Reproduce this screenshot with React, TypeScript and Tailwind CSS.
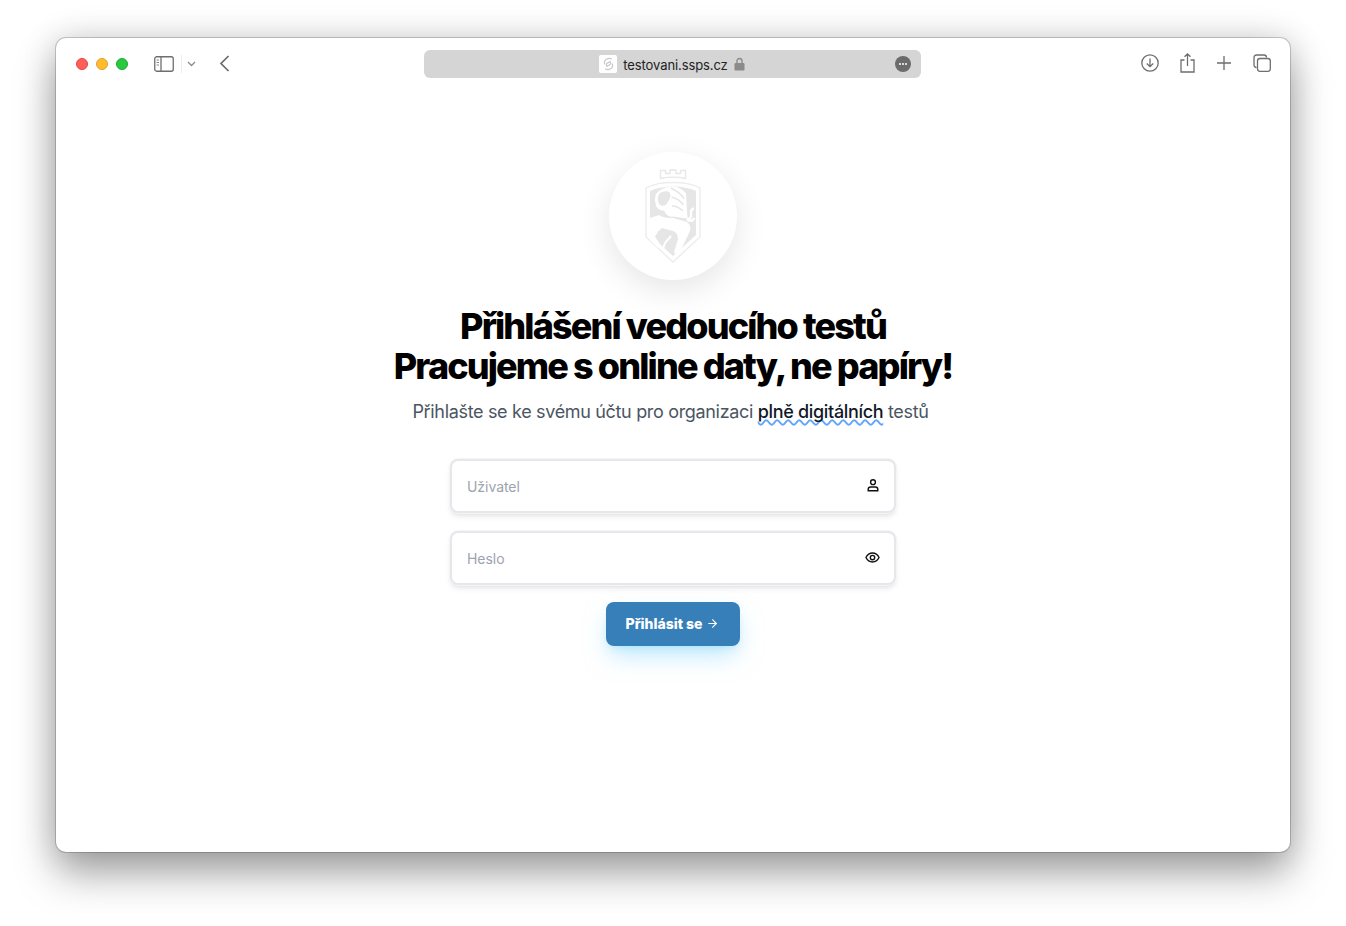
import React from 'react';
import { ArrowRight } from 'lucide-react';

const ShieldLogo = () => (
  <svg width="58" height="98" viewBox="0 0 58 98" fill="none">
    {/* crown */}
    <path d="M16.500 11.500V3.500h5V6.500H26V3h6v3.500h4.500v-3h5v8c-7-1.500-18-1.500-25 0Z" stroke="#e8e8e8" strokeWidth="1.400" strokeLinejoin="round" />
    {/* outer outline */}
    <path d="M2 21C9 17 19 15.500 29 15.500S49 17 56 21v49L29 95 2 70V21Z" stroke="#ececec" strokeWidth="1.300" />
    {/* shield body */}
    <path d="M6 24C12 21 20 19.500 29 19.500S46 21 52 24v44L29 89 6 68V24Z" fill="#e6e6e6" />
    {/* mane */}
    <path d="M12 27c4-5 10-7.500 17-7.500 6 .5 10 3 13 7l1.500 25-14.500-2c-3 1-7-1-9-6-4 0-7-2-8-5l-1-5c0-3 .5-5 1-6.500Z" fill="#fff" />
    <path d="M15 27c2-2 6-3 9-2.500 2.500 1 3 3.500 2 6-1 3-3 7-5.500 8-3 .5-5.500-.5-6-3-.5-1.500-1-4-.5-5 .5-1.500.5-2.500 1-3.500Z" fill="#e6e6e6" />
    <path d="M27 21c6 3 11 7 13 11M27.500 30c4 1 9 4 12 8M28 39c4 0 8 2 11 5" stroke="#e6e6e6" strokeWidth="1.600" />
    {/* tail */}
    <path d="M43 52c3.500 0 4.500-2 4-5-.5-3 .5-5 3-5.500M43 52c2 3 6 2 7.500-1" stroke="#fff" strokeWidth="2.400" />
    {/* body and legs */}
    <path d="M6 51l9-3c5 3 9 3 14 3l14 4c4 3 4 7 2 11l-8 17-5 5-2-3 4-13c0-4-2-7-5-8-4-1-7-2-11-3l-8 7 6 9-2 4-8-8v-22Z" fill="#fff" />
    <path d="M8 71l5-6M27 69l-6 7-2 6" stroke="#fff" strokeWidth="2" />
    {/* inner rim */}
    <path d="M3.500 69L29 92.500 54.500 69" stroke="#fff" strokeWidth="1.400" />
  </svg>
);

const App = () => {
  return (
    <div className="h-[926px] w-full overflow-hidden bg-white px-[56px] pt-[38px] font-['Inter',sans-serif]">
      <div className="flex h-[814px] flex-col rounded-[10px] bg-white shadow-[0_0_0_1px_rgba(0,0,0,0.18),0_22px_40px_rgba(0,0,0,0.34),0_0_34px_rgba(0,0,0,0.16)]">
        {/* safari toolbar */}
        <div className="grid h-[52px] shrink-0 grid-cols-[368px_497px_1fr] items-center">
          <div className="flex items-center pl-[20px]">
            <div className="flex gap-[8px]">
              <span className="h-[12px] w-[12px] rounded-full border border-[#e0443e] bg-[#ff5f57]" />
              <span className="h-[12px] w-[12px] rounded-full border border-[#dea123] bg-[#febc2e]" />
              <span className="h-[12px] w-[12px] rounded-full border border-[#1aab29] bg-[#28c840]" />
            </div>
            <svg className="ml-[26px]" width="20" height="16" viewBox="0 0 20 16" fill="none">
              <rect x="0.750" y="0.750" width="18.500" height="14.500" rx="2" stroke="#6e6e6e" strokeWidth="1.300" />
              <path d="M7 1v14" stroke="#6e6e6e" strokeWidth="1.300" />
              <path d="M2.500 4h2.500M2.500 6.500h2.500M2.500 9h2.500" stroke="#8a8a8a" strokeWidth="1" />
            </svg>
            <span className="ml-[7px] h-[18px] w-px bg-[#ececec]" />
            <svg className="ml-[5px]" width="9" height="6" viewBox="0 0 9 6" fill="none">
              <path d="M1 1l3.500 3.500L8 1" stroke="#8a8a8a" strokeWidth="1.300" />
            </svg>
            <svg className="ml-[23px] -mt-[1px]" width="11" height="17" viewBox="0 0 11 17" fill="none">
              <path d="M9.500 1L2 8.500 9.500 16" stroke="#6a6a6a" strokeWidth="1.700" />
            </svg>
          </div>
          <div className="relative flex h-[28px] items-center justify-center rounded-[6px] bg-[#d5d5d5] pr-[1px]">
            <span className="flex h-[18px] w-[18px] items-center justify-center rounded-[2px] bg-white">
              <svg width="13" height="14" viewBox="0 0 13 14" fill="none">
                <path d="M9.800 2.200C8 1 6 1.300 4 2.600 2.300 3.700 1.800 5.800 3 7.300M3.200 11.800c1.800 1.200 3.800.9 5.800-.4 1.700-1.100 2.200-3.200 1-4.700M8.500 4.200L4.900 6.500c-1 .7-.6 2.300.9 2.600M4.500 9.800l3.600-2.300c1-.7.6-2.300-.9-2.600" stroke="#c8c8c8" strokeWidth="1.200" />
              </svg>
            </span>
            <span className="ml-[6px] pt-[1px] text-[13px] leading-[18px] tracking-[-0.1px] text-[#222]">testovani.ssps.cz</span>
            <svg className="ml-[6px]" width="11" height="14" viewBox="0 0 11 14" fill="none">
              <path d="M3 6.500V4a2.500 2.500 0 0 1 5 0v2.500" stroke="#8a8a8a" strokeWidth="1.400" />
              <rect x="0.500" y="6" width="10" height="7.500" rx="1.200" fill="#8a8a8a" />
            </svg>
            <span className="absolute right-[10px] top-[6px] flex h-[16px] w-[16px] items-center justify-center gap-[1px] rounded-full bg-[#6b6b6b]">
              <span className="h-[2px] w-[2px] rounded-full bg-white" />
              <span className="h-[2px] w-[2px] rounded-full bg-white" />
              <span className="h-[2px] w-[2px] rounded-full bg-white" />
            </span>
          </div>
          <div className="flex items-center justify-end gap-[22px] pb-[2px] pr-[19px]">
            <svg className="-mr-[1px]" width="18" height="18" viewBox="0 0 18 18" fill="none">
              <circle cx="9" cy="9" r="8.200" stroke="#6e6e6e" strokeWidth="1.300" />
              <path d="M9 4.500v8M5.800 9.500L9 12.700l3.200-3.200" stroke="#6e6e6e" strokeWidth="1.300" />
            </svg>
            <svg width="15" height="20" viewBox="0 0 15 20" fill="none">
              <path d="M4.500 7H1v12h13V7h-3.500M7.500 13V1M4.500 3.800L7.500 1l3 2.800" stroke="#6e6e6e" strokeWidth="1.300" />
            </svg>
            <svg width="14" height="14" viewBox="0 0 14 14" fill="none">
              <path d="M7 0v14M0 7h14" stroke="#6e6e6e" strokeWidth="1.300" />
            </svg>
            <svg width="18" height="18" viewBox="0 0 18 18" fill="none">
              <path d="M3.500 13.500C2 13.500 1 12.500 1 11V3.500C1 2 2 1 3.500 1H11c1.500 0 2.500 1 2.500 2.500" stroke="#6e6e6e" strokeWidth="1.300" />
              <rect x="4.500" y="4.500" width="12.800" height="12.800" rx="2.500" stroke="#6e6e6e" strokeWidth="1.300" />
            </svg>
          </div>
        </div>

        {/* login page */}
        <div className="flex flex-col items-center pt-[62px]">
          <div className="flex h-[128px] w-[128px] items-center justify-center rounded-full bg-white shadow-[0_10px_32px_rgba(0,0,0,0.1)]">
            <ShieldLogo />
          </div>
          <h1 className="mt-[26px] text-center text-[36px] leading-[40px] font-extrabold tracking-[-0.052em] text-black">
            Přihlášení vedoucího testů
            <br />
            Pracujeme s online daty, ne papíry!
          </h1>
          <p className="mt-[12px] pr-[5px] text-[18px] leading-[28px] tracking-[-0.33px] text-[#4b5563]">
            Přihlašte se ke svému účtu pro organizaci{' '}
            <span className="font-medium text-[#111827] underline decoration-[#60a5fa] decoration-wavy decoration-[1.5px] underline-offset-[1px] [text-decoration-skip-ink:none]">plně digitálních</span>{' '}
            testů
          </p>
          <div className="mt-[33px] flex w-[446px] flex-col gap-[18px]">
            <div className="flex h-[54px] items-center justify-between rounded-[8px] border-2 border-[#e5e7eb] bg-white pl-[15px] pr-[15px] shadow-[0_0_0_1px_#f5f5f7,0_4px_6px_-1px_rgba(0,0,0,0.1),0_2px_4px_-2px_rgba(0,0,0,0.1)]">
              <span className="text-[14px] tracking-[-0.05px] text-[#9ca3af]">Uživatel</span>
              <svg className="-mt-[1px]" width="12" height="13" viewBox="0 0 12 13" fill="none" stroke="#111" strokeWidth="1.400">
                <circle cx="6" cy="3.200" r="2.400" />
                <path d="M1.200 11.800V10.500C1.200 9 2.400 8 3.600 8h4.800c1.200 0 2.400 1 2.400 2.500v1.300H1.200Z" />
              </svg>
            </div>
            <div className="flex h-[54px] items-center justify-between rounded-[8px] border-2 border-[#e5e7eb] bg-white pl-[15px] pr-[14px] shadow-[0_0_0_1px_#f5f5f7,0_4px_6px_-1px_rgba(0,0,0,0.1),0_2px_4px_-2px_rgba(0,0,0,0.1)]">
              <span className="text-[14px] tracking-[-0.05px] text-[#9ca3af]">Heslo</span>
              <svg className="-mt-[1px]" width="15" height="15" viewBox="0 0 24 24" fill="none" stroke="#111" strokeWidth="2.200">
                <path d="M1.500 12C4 7 8 4.800 12 4.800S20 7 22.500 12C20 17 16 19.200 12 19.200S4 17 1.500 12Z" />
                <circle cx="12" cy="12" r="3.500" />
              </svg>
            </div>
          </div>
          <button className="mt-[17px] flex h-[44px] w-[134px] items-center justify-center gap-[4px] rounded-[8px] bg-[#377fb8] pb-[1px] pr-[1px] text-[14px] font-extrabold text-white shadow-[0_12px_24px_-4px_rgba(125,211,252,0.55),0_4px_8px_-4px_rgba(125,211,252,0.5)]">
            Přihlásit se
            <ArrowRight size={13} strokeWidth={2} />
          </button>
        </div>
      </div>
    </div>
  );
};

export default App;
